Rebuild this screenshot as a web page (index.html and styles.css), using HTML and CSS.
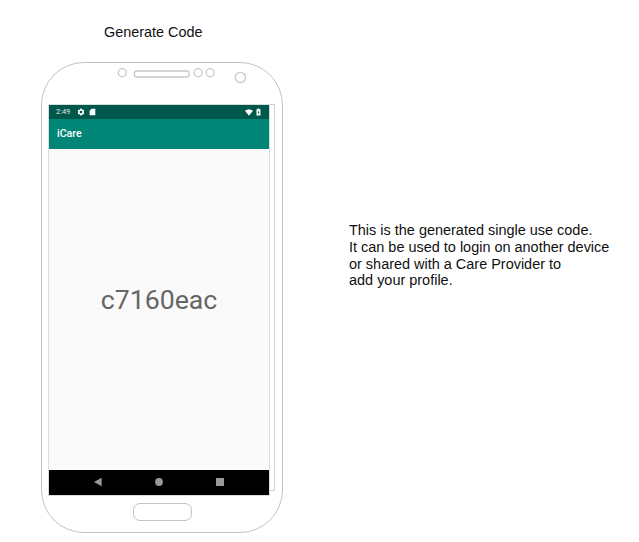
FILE: index.html
```html
<!DOCTYPE html>
<html lang="en">
<head>
<meta charset="utf-8">
<title>Generate Code</title>
<link rel="stylesheet" href="styles.css">
</head>
<body>
<main class="sheet">
  <section class="figure">
    <h1 class="title">Generate Code</h1>
    <div class="phone">
      <svg class="sensors" viewBox="0 0 240 41" aria-hidden="true">
        <circle cx="80.3" cy="9.7" r="4"/>
        <rect x="92.5" y="8" width="54.5" height="6" rx="2"/>
        <circle cx="156.2" cy="9.7" r="4"/>
        <circle cx="168.2" cy="9.7" r="4"/>
        <circle cx="198.4" cy="14.4" r="5.1"/>
      </svg>
      <div class="display">
        <div class="screen">
          <div class="status">
            <span class="time">2:49</span>
            <svg class="gear" viewBox="0 0 8 8" aria-hidden="true">
              <circle cx="4" cy="4" r="2.1"/>
              <path d="M4 .6v1.3M4 6.1v1.3M1.1 2.3l1.1.7M5.8 5l1.1.7M1.1 5.7L2.2 5M5.8 3l1.1-.7"/>
            </svg>
            <svg class="card" viewBox="0 0 7 8" aria-hidden="true"><path d="M2.5 .8H6.3V7.2H.6V2.7z"/></svg>
            <svg class="wifi" viewBox="0 0 8 7" aria-hidden="true"><path d="M0 1.8Q4-1.2 8 1.8L4 6.8z"/></svg>
            <svg class="battery" viewBox="0 0 5 8" aria-hidden="true"><path d="M1.6 .4h1.8v.8h1.1v6.4H.5V1.2h1.1z"/><path class="bolt" d="M2.7 2.3L1.6 4.7h.8v1.7l1.1-2.5h-.8z"/></svg>
          </div>
          <div class="appbar">iCare</div>
          <div class="content">c7160eac</div>
          <div class="nav">
            <svg viewBox="0 0 10 10" aria-hidden="true"><path d="M1 5L8.6 .8v8.4z"/></svg>
            <svg viewBox="0 0 10 10" aria-hidden="true"><circle cx="5" cy="5" r="3.9"/></svg>
            <svg viewBox="0 0 10 10" aria-hidden="true"><path d="M1 1h8v8H1z"/></svg>
          </div>
        </div>
        <div class="edge"></div>
      </div>
      <div class="home"></div>
    </div>
  </section>
  <p class="note">This is the generated single use code.<br>It can be used to login on another device<br>or shared with a Care Provider to<br>add your profile.</p>
</main>
</body>
</html>
```
FILE: styles.css
```css
* { box-sizing: border-box; }

body {
  margin: 0;
  background: #fff;
  color: #111;
  font-family: "Liberation Sans", Arial, sans-serif;
}

.sheet {
  display: flex;
  align-items: flex-start;
  height: 542px;
  padding: 24px 0 0 41px;
  overflow: hidden;
}

.figure { width: 242px; }

.title {
  height: 38px;
  margin: 0;
  padding-left: 63px;
  font-size: 14.4px;
  font-weight: 400;
  line-height: 17px;
}

.phone {
  display: flex;
  flex-direction: column;
  height: 471px;
  border: 1px solid #c2c2c2;
  border-radius: 43px;
}

.sensors {
  flex: none;
  width: 240px;
  height: 41px;
  fill: none;
  stroke: #c9c9c9;
  stroke-width: 1.3;
}

.display {
  display: flex;
  align-items: flex-start;
  height: 392px;
  padding-left: 6px;
}

.screen {
  display: flex;
  flex-direction: column;
  width: 222px;
  height: 392px;
  border: 1px solid #d9dddc;
}

.edge {
  width: 5px;
  height: 387px;
  border: 1px solid #cfcfcf;
  border-left: 0;
}

.status {
  display: flex;
  align-items: center;
  height: 14px;
  padding: 0 8px 0 7px;
  background: #00574b;
  color: #e4eeec;
  font: 400 7.4px/14px Roboto, sans-serif;
}

.status svg { fill: #fff; }
.time { width: 21px; }
.status .gear { width: 8px; height: 8px; fill: none; stroke: #fff; stroke-width: 1.5; }
.card { width: 7px; height: 8px; margin-left: 4px; }
.wifi { width: 8px; height: 7px; margin-left: auto; }
.battery { width: 5px; height: 8px; margin-left: 3px; }
.status .bolt { fill: #00574b; }

.appbar {
  height: 30px;
  padding-left: 8px;
  background: #008577;
  color: #fff;
  font: 500 10.6px/30px Roboto, sans-serif;
}

.content {
  display: flex;
  flex: 1;
  align-items: center;
  justify-content: center;
  padding-bottom: 18px;
  background: #fafafa;
  color: #666;
  font: 400 26.7px/1 Roboto, sans-serif;
}

.nav {
  display: flex;
  align-items: center;
  justify-content: space-between;
  height: 25px;
  padding: 0 44.5px 1px 43.5px;
  background: #000;
}

.nav svg { width: 10px; height: 10px; fill: #999; }

.home {
  width: 59px;
  height: 18px;
  margin: 7px 0 0 91px;
  border: 1px solid #c4c4c4;
  border-radius: 7px;
}

.note {
  margin: 198px 0 0 66px;
  font-size: 14.46px;
  line-height: 16.75px;
  white-space: nowrap;
}
```
